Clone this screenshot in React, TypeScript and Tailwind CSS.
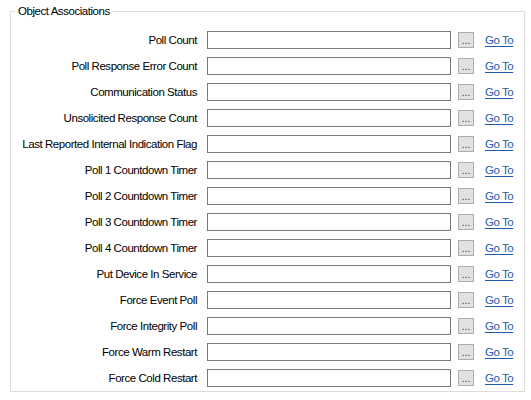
const rows = [
  "Poll Count",
  "Poll Response Error Count",
  "Communication Status",
  "Unsolicited Response Count",
  "Last Reported Internal Indication Flag",
  "Poll 1 Countdown Timer",
  "Poll 2 Countdown Timer",
  "Poll 3 Countdown Timer",
  "Poll 4 Countdown Timer",
  "Put Device In Service",
  "Force Event Poll",
  "Force Integrity Poll",
  "Force Warm Restart",
  "Force Cold Restart",
]

export default function App() {
  return (
    <div className="w-[531px] h-[400px] bg-white pt-[11px] pl-[10px] font-['Liberation_Sans',sans-serif] text-[11.5px] tracking-[-0.45px] text-black">
      <fieldset className="relative w-[515px] h-[381px] border border-[#dcdcdc] pt-[19px]">
        <div className="absolute -top-[8px] left-[4px] bg-white px-[3px] leading-[15px]">Object Associations</div>
        <div className="flex flex-col gap-[8px]">
          {rows.map((label) => (
            <div key={label} className="flex items-center h-[18px]">
              <div className="w-[186px] text-right whitespace-nowrap pt-[1px]">{label}</div>
              <div className="ml-[10px] w-[244px] h-[18px] border border-[#7a7a7a] bg-white" />
              <div className="ml-[7px] w-[16px] h-[16px] border border-[#adadad] bg-[#e1e1e1] flex items-end justify-center text-[10px] leading-[12px] tracking-normal text-[#333]">
                ...
              </div>
              <a className="ml-[11px] pt-[1px] text-[#1f5cb0] underline underline-offset-2 whitespace-nowrap cursor-pointer">Go To</a>
            </div>
          ))}
        </div>
      </fieldset>
    </div>
  )
}
